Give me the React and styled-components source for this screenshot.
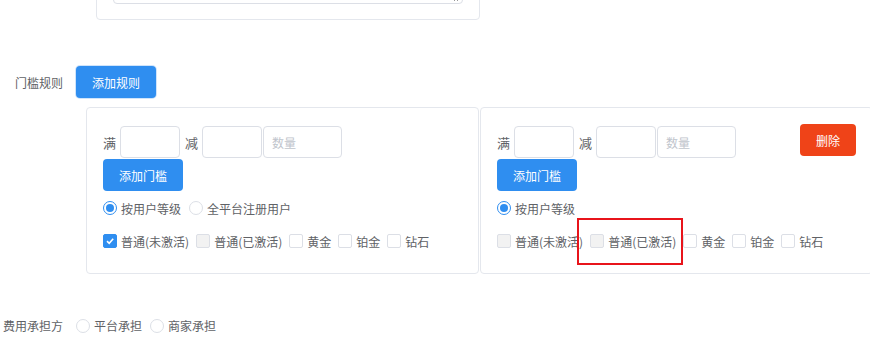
import styled, { createGlobalStyle } from "styled-components";

const GlobalStyle = createGlobalStyle`
  html, body {
    margin: 0;
    padding: 0;
    background: #ffffff;
    overflow: hidden;
  }
  body {
    font-family: "Noto Sans CJK SC", "Noto Sans", sans-serif;
    font-size: 12px;
    color: #606266;
  }
  * {
    box-sizing: border-box;
  }
`;

const Page = styled.div`
  width: 870px;
  height: 343px;
  overflow: hidden;
`;

const TopCard = styled.div`
  margin: -44px 0 0 96px;
  width: 384px;
  height: 64px;
  border: 1px solid #e4e7ed;
  border-radius: 4px;
  padding: 0 16px 0 16px;
`;

const TextArea = styled.div`
  height: 47px;
  border: 1px solid #dcdfe6;
  border-radius: 4px;
  position: relative;

  &::after {
    content: "";
    position: absolute;
    right: 2px;
    bottom: 2px;
    width: 6px;
    height: 6px;
    background: linear-gradient(135deg, transparent 45%, #999 45%, #999 55%, transparent 55%, transparent 70%, #999 70%, #999 80%, transparent 80%);
  }
`;

const FormRow = styled.div`
  display: flex;
  align-items: center;
  margin-top: ${(p) => p.$top || 0}px;
`;

const Label = styled.div`
  width: 64px;
  text-align: right;
  padding-right: 1px;
  margin-right: 12px;
  color: #606266;
  white-space: nowrap;
`;

const Button = styled.button`
  font-family: inherit;
  font-size: 12px;
  color: #ffffff;
  background: ${(p) => (p.$danger ? "#ef4318" : "#2f8ef0")};
  border: none;
  border-radius: 4px;
  width: ${(p) => p.$w || 80}px;
  height: 32px;
  padding: 0;
  cursor: pointer;
  box-shadow: ${(p) => (p.$ring ? "0 0 0 1px #cfe4fb" : "none")};
  flex-shrink: 0;
`;

const Rules = styled.div`
  display: flex;
  gap: 1px;
  margin: 9px 0 0 86px;
`;

const RuleCard = styled.div`
  width: 393px;
  height: 167px;
  flex-shrink: 0;
  border: 1px solid #e4e7ed;
  border-radius: 4px;
  padding: 18px 16px 0 16px;
  position: relative;
`;

const InputLine = styled.div`
  display: flex;
  align-items: center;
  justify-content: space-between;
`;

const Inputs = styled.div`
  display: flex;
  align-items: center;
`;

const Word = styled.span`
  font-size: 13px;
  color: #606266;
  margin: 0 ${(p) => p.$mr || 0}px 0 ${(p) => p.$ml || 0}px;
`;

const Input = styled.div`
  width: ${(p) => p.$w}px;
  height: 32px;
  border: 1px solid #dcdfe6;
  border-radius: 4px;
  margin-left: ${(p) => p.$ml || 0}px;
  padding-left: 8px;
  display: flex;
  align-items: center;
  color: #c0c4cc;
  font-size: 12px;
`;

const ButtonLine = styled.div`
  margin-top: 1px;
`;

const OptionLine = styled.div`
  display: flex;
  align-items: center;
  height: 14px;
  margin-top: ${(p) => p.$top}px;
`;

const Option = styled.label`
  display: flex;
  align-items: center;
  margin-right: ${(p) => p.$mr ?? 7}px;
  white-space: nowrap;
  color: #606266;
`;

const Radio = styled.span`
  width: 14px;
  height: 14px;
  border-radius: 50%;
  border: 1px solid ${(p) => (p.$on ? "#2f8ef0" : "#dcdfe6")};
  background: #fff;
  margin-right: 4px;
  display: flex;
  align-items: center;
  justify-content: center;

  &::after {
    content: "";
    width: 8px;
    height: 8px;
    border-radius: 50%;
    background: ${(p) => (p.$on ? "#2f8ef0" : "transparent")};
  }
`;

const Check = styled.span`
  width: 14px;
  height: 14px;
  border-radius: 2px;
  border: 1px solid ${(p) => (p.$on ? "#2f8ef0" : "#dcdfe6")};
  background: ${(p) => (p.$on ? "#2f8ef0" : p.$off ? "#f2f2f2" : "#fff")};
  margin-right: 4px;
  display: flex;
  align-items: center;
  justify-content: center;
`;

const DeleteSlot = styled.div`
  align-self: flex-start;
  margin-top: -2px;
`;

const Highlight = styled.div`
  position: absolute;
  left: 96px;
  top: 110px;
  width: 106px;
  height: 47px;
  border: 2px solid #e8141b;
`;

const Bottom = styled.div`
  display: flex;
  align-items: center;
  margin-top: 43px;
`;

const BottomLabel = styled.div`
  width: 64px;
  text-align: right;
  padding-right: 1px;
  margin-right: 12px;
  white-space: nowrap;
`;

const levels = ["普通(未激活)", "普通(已激活)", "黄金", "铂金", "钻石"];

function CheckMark() {
  return (
    <svg width="10" height="10" viewBox="0 0 10 10">
      <path d="M2 5.2 L4.2 7.3 L8.2 2.8" fill="none" stroke="#fff" strokeWidth="1.6" />
    </svg>
  );
}

function Levels({ states }) {
  return (
    <OptionLine $top={19}>
      {levels.map((l) => (
        <Option key={l}>
          <Check $on={states[l] === "on"} $off={states[l] === "off"}>
            {states[l] === "on" && <CheckMark />}
          </Check>
          {l}
        </Option>
      ))}
    </OptionLine>
  );
}

function Rule({ first }) {
  const states = first
    ? { "普通(未激活)": "on", "普通(已激活)": "off" }
    : { "普通(未激活)": "off", "普通(已激活)": "off" };

  return (
    <RuleCard>
      <InputLine>
        <Inputs>
          <Word $mr={4}>满</Word>
          <Input $w={60} />
          <Word $ml={5} $mr={4}>减</Word>
          <Input $w={60} />
          <Input $w={79} $ml={1}>数量</Input>
        </Inputs>
        {!first && (
          <DeleteSlot>
            <Button $danger $w={56}>删除</Button>
          </DeleteSlot>
        )}
      </InputLine>
      <ButtonLine>
        <Button>添加门槛</Button>
      </ButtonLine>
      <OptionLine $top={10}>
        <Option $mr={8}>
          <Radio $on />
          按用户等级
        </Option>
        {first && (
          <Option>
            <Radio />
            全平台注册用户
          </Option>
        )}
      </OptionLine>
      <Levels states={states} />
      {!first && <Highlight />}
    </RuleCard>
  );
}

export default function App() {
  return (
    <Page>
      <GlobalStyle />
      <TopCard>
        <TextArea />
      </TopCard>
      <FormRow $top={46}>
        <Label>门槛规则</Label>
        <Button $ring>添加规则</Button>
      </FormRow>
      <Rules>
        <Rule first />
        <Rule />
      </Rules>
      <Bottom>
        <BottomLabel>费用承担方</BottomLabel>
        <Option $mr={8}>
          <Radio />
          平台承担
        </Option>
        <Option>
          <Radio />
          商家承担
        </Option>
      </Bottom>
    </Page>
  );
}
